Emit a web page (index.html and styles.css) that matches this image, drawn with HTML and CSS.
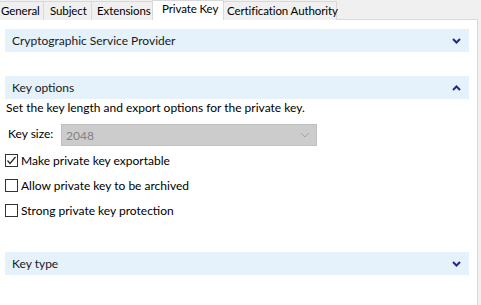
FILE: index.html
```html
<!DOCTYPE html>
<html lang="en">
<head>
  <meta charset="UTF-8">
  <title>Certificate Properties - Private Key</title>
  <link rel="stylesheet" href="styles.css">
</head>
<body>
  <div class="tabs">
    <div class="tab tab-general">General</div>
    <div class="tab tab-subject">Subject</div>
    <div class="tab tab-ext">Extensions</div>
    <div class="tab tab-key selected">Private Key</div>
    <div class="tab tab-ca">Certification Authority</div>
  </div>

  <div class="panel">
    <div class="section-header">
      <span>Cryptographic Service Provider</span>
      <svg class="chevron" width="9" height="6" viewBox="0 0 9 6"><polyline points="1,1 4.5,4.5 8,1" /></svg>
    </div>

    <div class="section-header gap">
      <span>Key options</span>
      <svg class="chevron" width="9" height="6" viewBox="0 0 9 6"><polyline points="1,5 4.5,1.5 8,5" /></svg>
    </div>
    <p class="desc">Set the key length and export options for the private key.</p>

    <div class="key-size">
      <label>Key size:</label>
      <div class="combo">
        <span>2048</span>
        <svg width="10" height="6" viewBox="0 0 10 6"><polyline points="1,1 5,5 9,1" /></svg>
      </div>
    </div>

    <div class="check-row">
      <span class="box">
        <svg width="11" height="11" viewBox="0 0 11 11"><polyline points="1.5,5.5 4,8.5 9.5,2" /></svg>
      </span>
      Make private key exportable
    </div>
    <div class="check-row">
      <span class="box"></span>
      Allow private key to be archived
    </div>
    <div class="check-row">
      <span class="box"></span>
      Strong private key protection
    </div>

    <div class="section-header last">
      <span>Key type</span>
      <svg class="chevron" width="9" height="6" viewBox="0 0 9 6"><polyline points="1,1 4.5,4.5 8,1" /></svg>
    </div>
  </div>
</body>
</html>
```

FILE: styles.css
```css
* {
  margin: 0;
  padding: 0;
  box-sizing: border-box;
}
html, body {
  width: 481px;
  height: 305px;
  overflow: hidden;
}
body {
  background-color: #f0f0f0;
  font-family: Lato, "Liberation Sans", sans-serif;
  font-size: 12px;
  color: #000;
}

/* tab strip */
.tabs {
  display: flex;
  height: 20px;
  position: relative;
  z-index: 1;
  font-size: 11.5px;
  letter-spacing: -0.1px;
}
.tab {
  height: 19px;
  margin-top: 1px;
  padding-top: 2px;
  line-height: 14px;
  border: 1px solid #d9d9d9;
  border-left: none;
  border-bottom: none;
  background-color: #f0f0f0;
  white-space: nowrap;
  overflow: hidden;
}
.tab-general { width: 44px; padding-left: 1px; }
.tab-subject { width: 48px; padding-left: 6px; }
.tab-ext { width: 61px; padding-left: 5px; }
.tab-key { width: 72px; padding-left: 9px; }
.tab-ca { width: 113px; padding-left: 3px; overflow: visible; }
.tab.selected {
  height: 20px;
  margin-top: 0;
  padding-top: 1px;
  background-color: #fff;
  border-left: 1px solid #d9d9d9;
  margin-left: -1px;
}

/* content panel */
.panel {
  width: 478px;
  height: 286px;
  margin-top: -1px;
  background-color: #fff;
  border-top: 1px solid #d9d9d9;
  border-right: 1px solid #d9d9d9;
  padding-top: 9px;
}
.section-header {
  display: flex;
  align-items: center;
  justify-content: space-between;
  height: 23px;
  margin-left: 5px;
  width: 464px;
  padding: 0 8px 0 7px;
  background-color: #e5f1fb;
  color: #1a1a1a;
}
.section-header.gap { margin-top: 24px; }
.section-header.last { margin-top: 35px; }
.chevron polyline {
  fill: none;
  stroke: #26268c;
  stroke-width: 2;
}

.desc {
  margin: 1px 0 0 6px;
  line-height: 16px;
}

.key-size {
  display: flex;
  margin: 8px 0 0 8px;
}
.key-size label {
  width: 53px;
  padding-top: 2px;
}
.combo {
  display: flex;
  align-items: center;
  justify-content: space-between;
  width: 256px;
  height: 22px;
  padding: 0 6px 0 4px;
  background-color: #cccccc;
  border: 1px solid #bfbfbf;
  color: #838383;
}
.combo polyline {
  fill: none;
  stroke: #a6a6a6;
  stroke-width: 1;
}

.check-row {
  display: flex;
  align-items: center;
  gap: 3px;
  height: 13px;
  margin: 12px 0 0 5px;
}
.key-size + .check-row { margin-top: 8px; }
.box {
  display: flex;
  align-items: center;
  justify-content: center;
  width: 13px;
  height: 13px;
  border: 1px solid #333;
  background-color: #fff;
}
.box polyline {
  fill: none;
  stroke: #222;
  stroke-width: 1.2;
}
```
